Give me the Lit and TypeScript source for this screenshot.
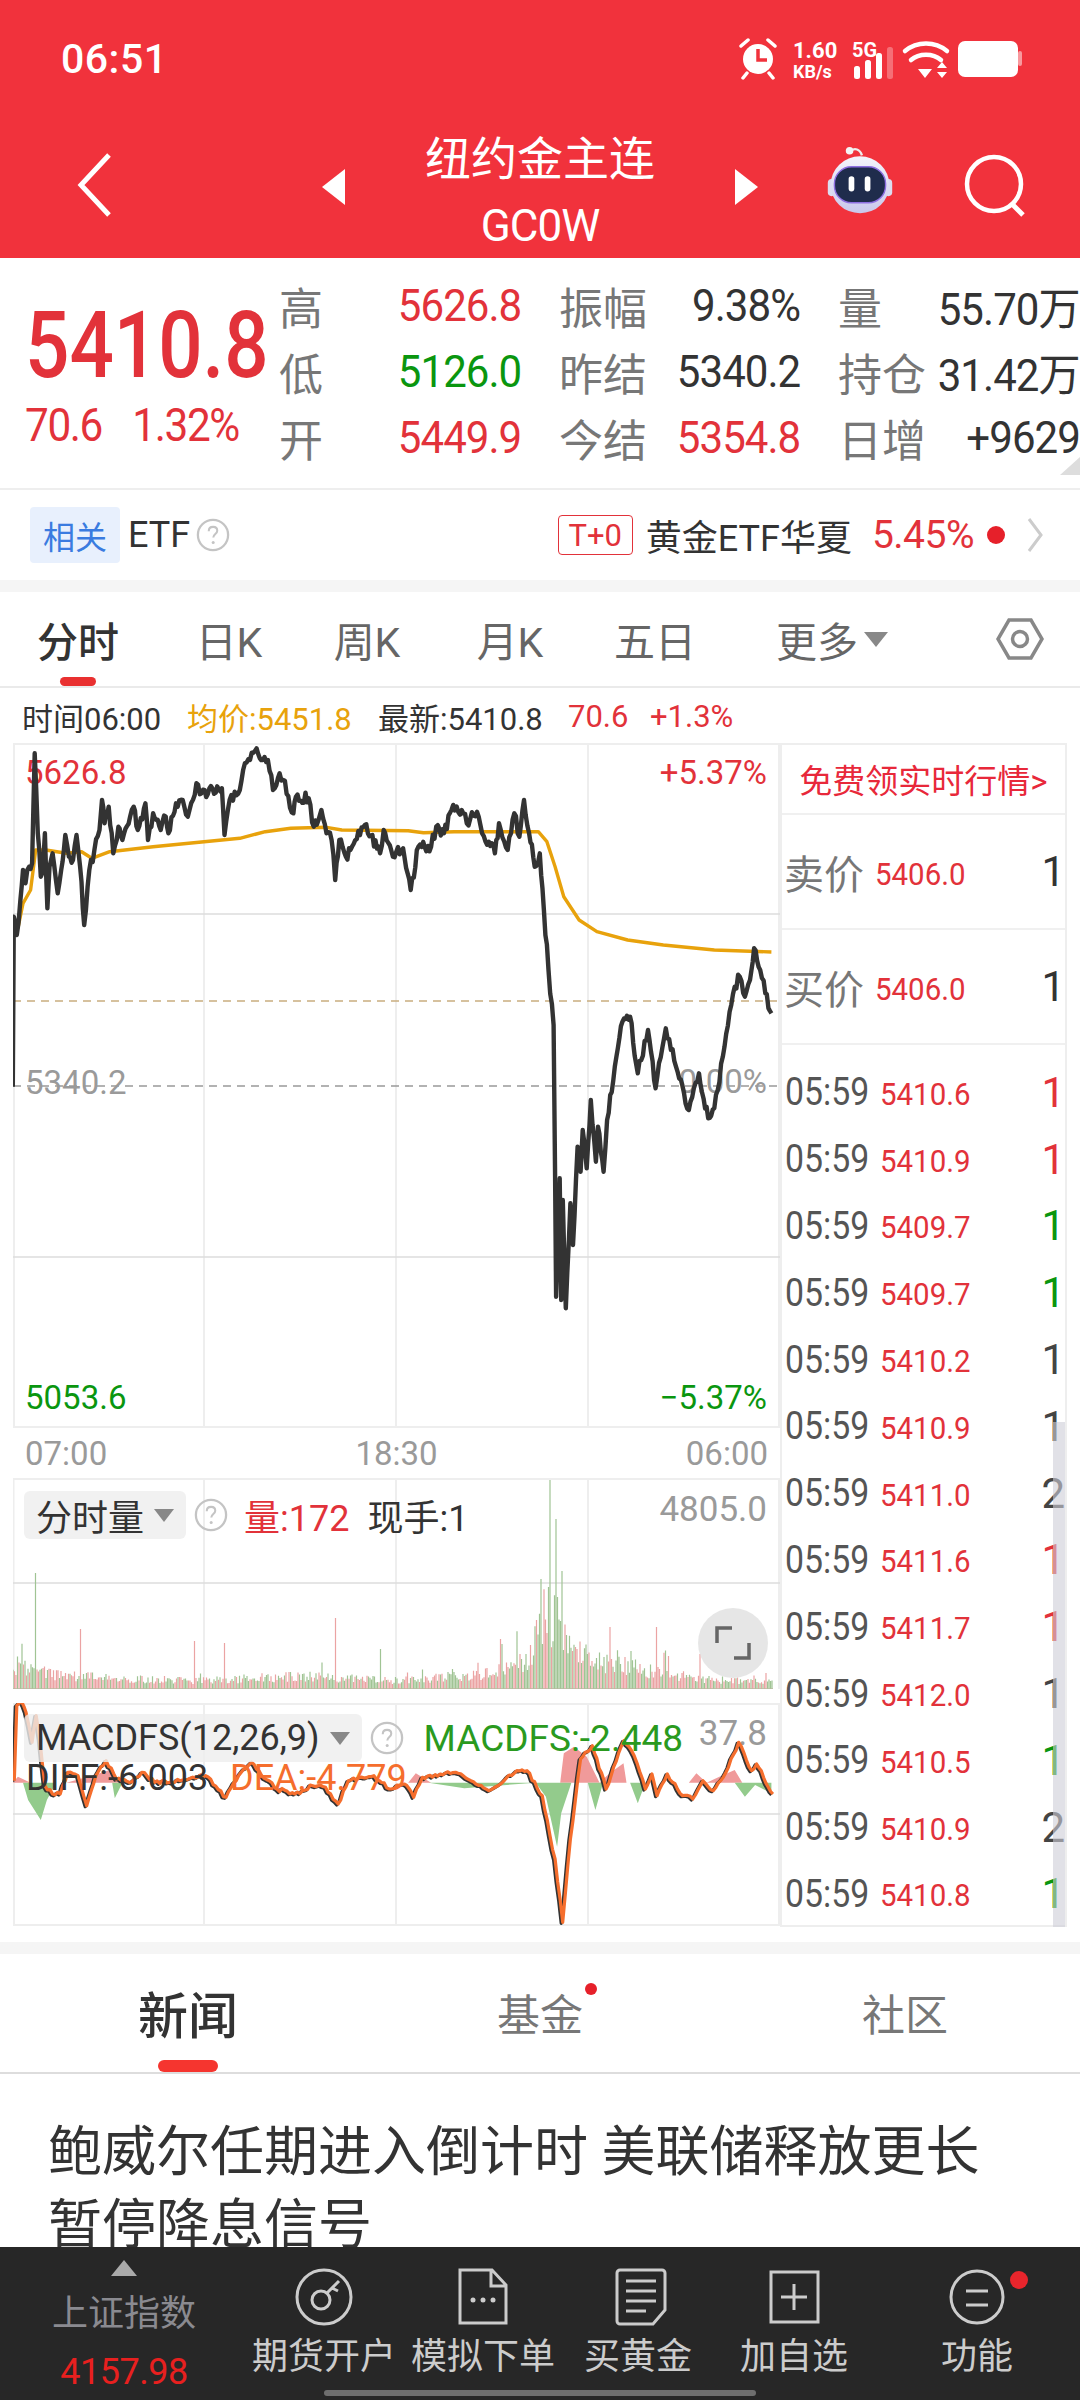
import { LitElement, html, svg, css } from 'lit';
import { customElement } from 'lit/decorators.js';

type Pt = [number, number];

// price and average lines, read off a crop at 1.96x / 3x
const PRICE: Pt[] = [[25,1460],[27,950],[33,1005],[40,900],[45,810],[50,850],[57,800],[63,790],[68,460],[74,700],[80,830],[85,780],[88,700],[93,925],[97,800],[103,760],[113,880],[120,810],[128,705],[135,770],[143,780],[150,705],[157,800],[165,975],[175,810],[185,750],[195,690],[200,600],[205,670],[213,620],[222,760],[232,680],[240,720],[255,650],[262,620],[270,690],[285,610],[290,720],[300,640],[315,690],[325,650],[330,700],[345,610],[358,600],[368,650],[385,550],[395,580],[435,565],[440,705],[450,600],[470,570],[480,490],[490,480],[503,445],[515,480],[525,480],[535,570],[548,520],[555,540],[575,640],[580,590],[605,595],[615,680],[630,630],[640,700],[650,720],[657,840],[665,720],[678,770],[690,740],[715,675],[745,760],[752,690],[770,770],[790,745],[805,870],[820,740],[845,740],[855,680],[870,700],[885,630],[905,630],[915,670],[935,635],[945,700],[958,725],[970,760],[978,670],[995,750],[1008,640],[1018,710],[1027,600],[1037,700],[1048,800],[1058,760],[1066,930],[1075,1110],[1085,1275],[1088,1730],[1090,2090],[1097,1735],[1100,2100],[1103,1800],[1109,2125],[1118,1810],[1123,1935],[1132,1640],[1138,1715],[1142,1590],[1150,1705],[1158,1500],[1168,1685],[1172,1580],[1183,1715],[1190,1560],[1205,1400],[1220,1265],[1235,1250],[1250,1420],[1270,1290],[1285,1465],[1305,1285],[1325,1400],[1350,1530],[1370,1420],[1388,1555],[1400,1525],[1420,1340],[1440,1160],[1450,1130],[1460,1190],[1470,1140],[1478,1045],[1490,1110],[1500,1180],[1512,1240]];
const AVERAGE: Pt[] = [[35,985],[45,910],[60,870],[70,750],[90,750],[130,760],[160,755],[180,775],[215,755],[300,740],[400,725],[470,715],[520,695],[570,685],[640,682],[670,690],[800,692],[830,698],[890,695],[1055,695],[1072,725],[1088,800],[1105,890],[1135,960],[1170,995],[1230,1020],[1300,1035],[1400,1050],[1512,1056]];
const MACD: Pt[] = [[25,545],[30,320],[40,310],[48,340],[60,430],[68,350],[75,420],[85,560],[100,585],[115,585],[130,520],[150,530],[167,620],[185,530],[205,485],[225,540],[250,550],[275,520],[300,550],[350,545],[400,530],[440,595],[470,520],[490,490],[510,530],[540,570],[575,585],[610,560],[635,565],[660,615],[680,545],[730,530],[760,570],[790,555],[808,595],[825,535],[860,525],[890,520],[920,545],[955,575],[985,545],[1010,515],[1030,515],[1060,590],[1075,710],[1085,780],[1100,970],[1115,720],[1125,600],[1135,480],[1158,440],[1185,570],[1220,425],[1240,470],[1262,570],[1275,525],[1285,590],[1305,525],[1335,590],[1355,600],[1375,545],[1395,575],[1420,520],[1445,430],[1470,515],[1480,495],[1512,585]];
const HIST_UP: Pt[] = [[25,548],[35,530],[60,548],[130,548],[185,525],[215,510],[240,548],[800,548],[815,520],[845,548],[1098,548],[1105,460],[1125,440],[1150,470],[1175,548],[1195,520],[1222,490],[1228,548],[1350,548],[1365,520],[1385,548],[1410,530],[1440,510],[1455,548]];
const HIST_DOWN: Pt[] = [[45,548],[55,600],[80,660],[92,600],[110,548],[220,548],[225,595],[240,548],[840,548],[910,565],[1050,548],[1070,590],[1092,740],[1100,640],[1120,548],[1152,548],[1167,630],[1182,548],[1235,548],[1250,610],[1265,548],[1440,548],[1460,590],[1480,555],[1512,580],[1512,548]];
const VOLUME_ENVELOPE: Pt[] = [[13,35],[30,30],[60,20],[120,14],[200,12],[300,18],[390,12],[480,20],[510,28],[530,45],[545,110],[560,95],[575,50],[600,40],[650,26],[700,14],[773,10]];
const VOLUME_SPIKES: Pt[] = [[35,116],[80,60],[195,48],[224,46],[335,71],[380,40],[500,50],[541,110],[550,209],[556,170],[562,118],[656,62],[700,35]];

const TICKS: [string, string][] = [
  ['5410.6', 'up'], ['5410.9', 'up'], ['5409.7', 'down'], ['5409.7', 'down'],
  ['5410.2', 'flat'], ['5410.9', 'flat'], ['5411.0', 'flat2'], ['5411.6', 'up'],
  ['5411.7', 'up'], ['5412.0', 'flat'], ['5410.5', 'down'], ['5410.9', 'flat2'], ['5410.8', 'down'],
];

// small seeded generator so every render gives the same wiggle
function seeded(seed: number) {
  let s = seed;
  return () => {
    s = (s * 1664525 + 1013904223) % 4294967296;
    return s / 4294967296;
  };
}

const priceX = (zx: number) => zx / 1.96;
const priceY = (zy: number) => 600 + zy / 3;
const macdY = (zy: number) => 1600 + zy / 3;

function toPath(pts: Pt[]) {
  return pts.map((p, i) => `${i ? 'L' : 'M'}${p[0].toFixed(1)} ${p[1].toFixed(1)}`).join('');
}

function wiggle(pts: Pt[], step: number, amp: number, seed: number): Pt[] {
  const rnd = seeded(seed);
  const out: Pt[] = [];
  for (let i = 0; i < pts.length - 1; i++) {
    const [x0, y0] = pts[i];
    const [x1, y1] = pts[i + 1];
    const n = Math.max(1, Math.round(Math.abs(x1 - x0) / step));
    for (let k = 0; k < n; k++) {
      const t = k / n;
      const j = k === 0 ? 0 : (rnd() - 0.5) * amp;
      out.push([x0 + (x1 - x0) * t, y0 + (y1 - y0) * t + j]);
    }
  }
  out.push(pts[pts.length - 1]);
  return out;
}

function envelopeAt(x: number) {
  for (let i = 0; i < VOLUME_ENVELOPE.length - 1; i++) {
    const [x0, h0] = VOLUME_ENVELOPE[i];
    const [x1, h1] = VOLUME_ENVELOPE[i + 1];
    if (x >= x0 && x <= x1) return h0 + ((h1 - h0) * (x - x0)) / (x1 - x0);
  }
  return 10;
}

function volumePaths() {
  const rnd = seeded(41);
  let red = '';
  let green = '';
  for (let x = 13; x < 773; x += 1.5) {
    let h = envelopeAt(x) * (0.4 + rnd() * 0.6);
    if (rnd() < 0.035) h *= 1.8;
    for (const [sx, sh] of VOLUME_SPIKES) if (Math.abs(sx - x) < 0.8) h = sh;
    const seg = `M${x.toFixed(1)} 1689V${(1689 - h).toFixed(1)}`;
    if (rnd() < 0.5) red += seg;
    else green += seg;
  }
  return { red, green };
}

const pricePath = toPath(wiggle(PRICE.map(([x, y]) => [priceX(x), priceY(y)] as Pt), 1.6, 11, 7));
const averagePath = toPath(AVERAGE.map(([x, y]) => [priceX(x), priceY(y)] as Pt));
const macdPts = wiggle(MACD.map(([x, y]) => [priceX(x), macdY(y)] as Pt), 2.5, 4, 11);
const diffPath = toPath(macdPts);
const deaPath = toPath(macdPts.map(([x, y]) => [x + 1.5, y - 1] as Pt));
const histUp = toPath(HIST_UP.map(([x, y]) => [priceX(x), macdY(y)] as Pt)) + 'Z';
const histDown = toPath(HIST_DOWN.map(([x, y]) => [priceX(x), macdY(y)] as Pt)) + 'Z';
const volume = volumePaths();

const helpIcon = html`<svg class="help" viewBox="0 0 36 36"><circle cx="18" cy="18" r="16" fill="none" stroke="#c4c4c4" stroke-width="2.4"/><path d="M13.5 14c0-3 2-4.6 4.6-4.6s4.4 1.6 4.4 4c0 3.4-4.2 3.6-4.2 7.2" fill="none" stroke="#c4c4c4" stroke-width="2.2"/><circle cx="18.2" cy="26" r="1.6" fill="#c4c4c4"/></svg>`;

@customElement('app-root')
export class AppRoot extends LitElement {
  static styles = css`
    :host {
      display: flex;
      flex-direction: column;
      width: 1080px;
      height: 2400px;
      overflow: hidden;
      background: #fff;
      color: #333;
      font-family: Roboto, 'Noto Sans CJK SC', sans-serif;
      position: relative;
    }
    svg { display: block; }
    .main { flex: 1; min-height: 0; overflow: hidden; }
    .red { color: #e2323a; }
    .green { color: #0a960f; }
    .gray { color: #9a9a9a; }

    .top { height: 258px; background: #f1323c; color: #fff; position: relative; flex: none; }
    .status { height: 118px; display: flex; align-items: center; padding-left: 61px; }
    .clock { font-size: 41px; font-weight: 500; letter-spacing: 0.5px; flex: 1; }
    .status-icons { width: 330px; height: 50px; margin-right: 19px; }
    .status-icons text { fill: #fff; font-family: Roboto, sans-serif; font-weight: 700; }
    .nav { display: flex; height: 140px; position: relative; }
    .nav-icon { position: absolute; }
    .back { left: 75px; top: 32px; }
    .arrow-l { left: 320px; top: 50px; }
    .arrow-r { left: 734px; top: 50px; }
    .robot { left: 822px; top: 27px; }
    .search { left: 960px; top: 30px; }
    .title { flex: 1; display: flex; flex-direction: column; align-items: center; }
    .title-cn { font-size: 46px; line-height: 60px; margin-top: 11px; }
    .title-code { font-size: 44px; line-height: 60px; letter-spacing: -1px; margin-top: 7px; }

    .stats { height: 232px; display: flex; flex: none; position: relative; border-bottom: 2px solid #eee; box-sizing: border-box; }
    .quote { width: 279px; padding: 40px 0 0 25px; box-sizing: border-box; }
    .last { font-size: 93px; line-height: 96px; font-weight: 500; color: #e2323a; transform: scaleX(0.84); transform-origin: left; white-space: nowrap; }
    .change { display: flex; gap: 33px; font-size: 46px; line-height: 50px; letter-spacing: -1.5px; margin-top: 6px; color: #e2323a; transform: scaleX(0.92); transform-origin: left; }
    .stat-grid { display: grid; grid-template-columns: 242px 241px 242px; column-gap: 38px; grid-auto-rows: 66px; padding-top: 15px; font-size: 44px; }
    .stat { display: flex; justify-content: space-between; align-items: center; white-space: nowrap; letter-spacing: -1px; }
    .stat b { font-weight: 400; color: #777; letter-spacing: 0; }
    .stat span { display: inline-block; transform: scaleX(0.955); transform-origin: right; }
    .corner { position: absolute; right: 0; bottom: 13px; width: 0; height: 0; border-left: 20px solid transparent; border-bottom: 18px solid #ddd; }

    .etf { height: 90px; display: flex; align-items: center; flex: none; padding-left: 30px; font-size: 36px; white-space: nowrap; }
    .etf-tag { width: 90px; height: 56px; background: #e8f0fd; color: #3a7be0; border-radius: 4px; display: flex; align-items: center; justify-content: center; font-size: 32px; margin-right: 8px; }
    .help { width: 34px; height: 34px; margin-left: 6px; flex: none; }
    .etf-right { margin-left: auto; display: flex; align-items: center; padding-right: 36px; }
    .t0 { width: 75px; height: 40px; box-sizing: border-box; border: 1.5px solid #e2323a; border-radius: 4px; color: #e2323a; font-size: 31px; display: flex; align-items: center; justify-content: center; margin-right: 13px; }
    .etf-pct { color: #e2323a; margin-left: 20px; font-size: 39px; letter-spacing: -0.5px; }
    .etf-dot { width: 18px; height: 18px; border-radius: 50%; background: #e6202a; margin: 0 22px 0 13px; }
    .gap { height: 12px; background: #f5f5f5; flex: none; }

    .tabs { height: 96px; display: grid; grid-template-columns: 156px 146px 130px 156px 134px 220px 138px; align-items: center; border-bottom: 2px solid #eaeaea; box-sizing: border-box; position: relative; font-size: 41px; color: #666; }
    .tab { display: flex; justify-content: center; align-items: center; gap: 6px; }
    .tab-on { color: #333; font-weight: 500; }
    .tab-bar { position: absolute; left: 60px; bottom: 0; width: 36px; height: 9px; border-radius: 5px; background: #e93030; }
    .caret { width: 0; height: 0; border-left: 12px solid transparent; border-right: 12px solid transparent; border-top: 15px solid #888; }
    .hex { justify-self: end; margin-right: 36px; }

    .info { height: 55px; display: flex; align-items: center; padding: 2px 0 0 22px; box-sizing: border-box; font-size: 31px; white-space: nowrap; }
    .info span:nth-child(1) { width: 165px; }
    .info span:nth-child(2) { width: 191px; color: #e8a20c; }
    .info span:nth-child(3) { width: 190px; }
    .info span:nth-child(4) { width: 82px; color: #e2323a; }
    .info span:nth-child(5) { color: #e2323a; }

    .market { display: flex; padding-left: 13px; height: 1199px; flex: none; box-sizing: border-box; }
    .charts { width: 767px; flex: none; }
    .panel { position: relative; font-size: 33px; white-space: nowrap; }
    .panel svg.plot { position: absolute; left: 0; top: 0; }
    .price-panel { height: 685px; }
    .axis { height: 50px; display: flex; justify-content: space-between; align-items: center; padding: 0 12px; font-size: 33px; color: #9a9a9a; }
    .volume-panel { height: 211px; margin-bottom: 14px; }
    .macd-panel { height: 223px; }
    .label { position: absolute; line-height: 40px; }
    .l-top { left: 12px; top: 10px; }
    .r-top { right: 13px; top: 10px; }
    .l-mid { left: 12px; top: 320px; }
    .r-mid { right: 13px; top: 319px; }
    .l-bot { left: 12px; top: 635px; }
    .r-bot { right: 13px; top: 635px; }
    .legend { position: absolute; left: 11px; top: 11px; display: flex; align-items: center; font-size: 36px; z-index: 1; }
    .pill { height: 48px; background: rgba(238, 238, 238, 0.8); border-radius: 6px; display: flex; align-items: center; gap: 8px; padding: 0 12px; color: #333; margin-right: 8px; }
    .legend .help { margin: 0 16px 0 0; }
    .legend .caret { border-left-width: 10px; border-right-width: 10px; border-top-width: 13px; margin-left: 2px; }
    .legend-value { margin-right: 18px; }
    .macd-value { color: #2a9a1e; font-size: 37px; margin-left: 4px; }
    .vol-max { right: 13px; top: 12px; font-size: 35px; }
    .macd-max { right: 13px; top: 11px; font-size: 35px; }
    .macd-diff { left: 13px; top: 55px; font-size: 36px; color: #333; z-index: 1; }
    .macd-dea { left: 217px; top: 55px; font-size: 36px; color: #f56e2d; z-index: 1; }
    .expand { position: absolute; left: 685px; top: 130px; width: 70px; height: 70px; border-radius: 50%; background: rgba(222, 222, 222, 0.75); display: flex; align-items: center; justify-content: center; }

    .book { width: 287px; flex: none; box-sizing: border-box; border: 2px solid #eee; position: relative; height: 1184px; }
    .promo { height: 70px; display: flex; align-items: center; justify-content: center; color: #e8283a; font-size: 33px; border-bottom: 2px solid #f0f0f0; white-space: nowrap; box-sizing: border-box; }
    .quote-row { height: 115px; display: flex; align-items: center; padding: 0 0 0 2px; border-bottom: 2px solid #f0f0f0; box-sizing: border-box; }
    .quote-row b { font-weight: 400; font-size: 40px; color: #777; width: 91px; }
    .quote-row i { font-style: normal; color: #e2323a; font-size: 31px; flex: 1; padding-top: 6px; transform: scaleX(0.95); transform-origin: left; }
    .quote-row em { font-style: normal; font-size: 42px; color: #333; }
    .ticks { padding-top: 14px; }
    .tick { height: 66.8px; display: flex; align-items: center; padding: 0 0 0 3px; }
    .tick-time { font-size: 38px; color: #555; width: 95px; transform: scaleX(0.89); transform-origin: left; }
    .tick-price { font-size: 31px; color: #e2323a; flex: 1; padding-top: 4px; transform: scaleX(0.95); transform-origin: left; }
    .tick-qty { font-size: 42px; width: 24px; text-align: right; }
    .tick-qty.up { color: #e2323a; }
    .tick-qty.down { color: #0a960f; }
    .tick-qty.flat, .tick-qty.flat2 { color: #444; }
    .scroll { position: absolute; right: 0; top: 677px; width: 12px; height: 505px; background: rgba(205, 205, 215, 0.6); }

    .gap2 { height: 12px; background: #f5f5f5; }
    .news-tabs { height: 120px; display: grid; grid-template-columns: 376px 328px 376px; align-items: center; border-bottom: 2px solid #ddd; box-sizing: border-box; position: relative; color: #777; font-size: 43px; padding-bottom: 3px; }
    .news-tab { display: flex; justify-content: center; position: relative; }
    .news-on { font-size: 50px; color: #333; font-weight: 500; }
    .news-last { padding-left: 26px; }
    .news-bar { position: absolute; left: 158px; bottom: 0; width: 60px; height: 12px; border-radius: 6px; background: #f5352f; }
    .news-dot { position: absolute; left: 209px; top: 2px; width: 12px; height: 12px; border-radius: 50%; background: #e6202a; }
    .headline { padding: 42px 60px 0 48px; font-size: 54px; line-height: 73px; color: #333; }

    .dock { height: 153px; flex: none; background: #272727; display: grid; grid-template-columns: 248px 152px 166px 144px 168px 198px; position: relative; color: #ccc; font-size: 36px; }
    .dock-item { display: flex; flex-direction: column; align-items: center; padding-top: 20px; white-space: nowrap; }
    .dock-icon { height: 60px; margin-bottom: 8px; position: relative; }
    .dock-label { line-height: 44px; }
    .index { padding-top: 13px; color: #8a8a90; }
    .index-up { width: 0; height: 0; border-left: 13px solid transparent; border-right: 13px solid transparent; border-bottom: 16px solid #aaa; }
    .index-name { line-height: 44px; margin-top: 16px; }
    .index-value { color: #e8201f; font-size: 36px; line-height: 44px; margin-top: 14px; letter-spacing: -0.5px; }
    .dock-dot { position: absolute; left: 1010px; top: 24px; width: 18px; height: 18px; border-radius: 50%; background: #e8252c; }
    .home-bar { position: absolute; left: 324px; bottom: 4px; width: 432px; height: 6px; border-radius: 3px; background: #6e6e6e; }
  `;

  private statusIcons() {
    return svg`
      <g fill="#fff">
        <circle cx="27" cy="25" r="15"/>
        <path d="M10 12l7-6M44 12l-7-6M16 39l-4 5M38 39l4 5" stroke="#fff" stroke-width="3.5" stroke-linecap="round"/>
        <path d="M27 15v11h9" fill="none" stroke="#f1323c" stroke-width="3.5"/>
        <text x="62" y="24" font-size="22">1.60</text>
        <text x="62" y="44" font-size="18">KB/s</text>
        <text x="121" y="23" font-size="20">5G</text>
        <rect x="123" y="32" width="6" height="13" rx="2.5"/>
        <rect x="134" y="26" width="6" height="19" rx="2.5"/>
        <rect x="145" y="19" width="6" height="26" rx="2.5"/>
        <rect x="156" y="13" width="6" height="32" rx="2.5" opacity=".3"/>
      </g>
      <g fill="none" stroke="#fff" stroke-width="4.5" stroke-linecap="round">
        <path d="M174 17c12-10 30-10 42 0"/>
        <path d="M180 26c8-7 22-7 30 0"/>
      </g>
      <path d="M187 35h14l-7 9zM206 34l5-6 5 6zM206 38h10l-5 6z" fill="#fff"/>
      <rect x="227" y="7" width="60" height="36" rx="7" fill="#fff"/>
      <rect x="287" y="17" width="4" height="15" rx="2" fill="#fff" opacity=".5"/>
    `;
  }

  private robot() {
    return html`<svg width="76" height="72" viewBox="0 0 80 76">
      <defs>
        <linearGradient id="shell" x1="0" y1="0" x2="0" y2="1"><stop offset="0" stop-color="#f4f4fb"/><stop offset="1" stop-color="#c9c8ec"/></linearGradient>
      </defs>
      <path d="M31 6c3-3 9-2 11 5" fill="none" stroke="#eee" stroke-width="2.5"/>
      <circle cx="29" cy="6" r="4" fill="#f4f4f4"/>
      <rect x="6" y="36" width="8" height="18" rx="4" fill="#dcdcf0"/>
      <rect x="66" y="36" width="8" height="18" rx="4" fill="#dcdcf0"/>
      <ellipse cx="40" cy="42" rx="31" ry="30" fill="url(#shell)"/>
      <rect x="13" y="23" width="54" height="38" rx="18" fill="#1f2c4c" stroke="#8d6fe0" stroke-width="1.5"/>
      <rect x="28" y="33" width="6" height="16" rx="3" fill="#fff"/>
      <rect x="45" y="33" width="6" height="16" rx="3" fill="#fff"/>
    </svg>`;
  }

  private header() {
    return html`<div class="top">
      <div class="status">
        <div class="clock">06:51</div>
        <svg class="status-icons" viewBox="0 0 330 50">${this.statusIcons()}</svg>
      </div>
      <div class="nav">
        <svg class="nav-icon back" width="40" height="70" viewBox="0 0 40 70"><path d="M34 5L6 35l28 30" fill="none" stroke="#fff" stroke-width="5"/></svg>
        <svg class="nav-icon arrow-l" width="26" height="38" viewBox="0 0 26 38"><path d="M25 1v36L2 19z" fill="#fff"/></svg>
        <div class="title">
          <div class="title-cn">纽约金主连</div>
          <div class="title-code">GC0W</div>
        </div>
        <svg class="nav-icon arrow-r" width="26" height="38" viewBox="0 0 26 38"><path d="M1 1v36l23-18z" fill="#fff"/></svg>
        <div class="nav-icon robot">${this.robot()}</div>
        <svg class="nav-icon search" width="70" height="70" viewBox="0 0 70 70"><circle cx="34" cy="36" r="27" fill="none" stroke="#fff" stroke-width="4.5"/><path d="M52 56l11 11" stroke="#fff" stroke-width="5"/></svg>
      </div>
    </div>`;
  }

  private stats() {
    const stat = (label: string, value: string, cls = '') =>
      html`<div class="stat"><b>${label}</b><span class=${cls}>${value}</span></div>`;
    return html`<div class="stats">
      <div class="quote">
        <div class="last">5410.8</div>
        <div class="change"><span>70.6</span><span>1.32%</span></div>
      </div>
      <div class="stat-grid">
        ${stat('高', '5626.8', 'red')}${stat('振幅', '9.38%')}${stat('量', '55.70万')}
        ${stat('低', '5126.0', 'green')}${stat('昨结', '5340.2')}${stat('持仓', '31.42万')}
        ${stat('开', '5449.9', 'red')}${stat('今结', '5354.8', 'red')}${stat('日增', '+9629')}
      </div>
      <div class="corner"></div>
    </div>`;
  }

  private etf() {
    return html`<div class="etf">
      <div class="etf-tag">相关</div>
      <span>ETF</span>${helpIcon}
      <div class="etf-right">
        <div class="t0">T+0</div>
        <span>黄金ETF华夏</span>
        <span class="etf-pct">5.45%</span>
        <div class="etf-dot"></div>
        <svg width="17" height="36" viewBox="0 0 17 36"><path d="M2 2l12 16L2 34" fill="none" stroke="#ccc" stroke-width="3"/></svg>
      </div>
    </div>`;
  }

  private tabs() {
    return html`<div class="tabs">
      <div class="tab tab-on">分时</div>
      <div class="tab">日K</div>
      <div class="tab">周K</div>
      <div class="tab">月K</div>
      <div class="tab">五日</div>
      <div class="tab">更多<span class="caret"></span></div>
      <svg class="hex" width="48" height="48" viewBox="0 0 48 48"><path d="M13 5h22l11 19-11 19H13L2 24z" fill="none" stroke="#888" stroke-width="3.5"/><circle cx="24" cy="24" r="7.5" fill="none" stroke="#888" stroke-width="3.5"/></svg>
      <div class="tab-bar"></div>
    </div>`;
  }

  private pricePanel() {
    return html`<div class="panel price-panel">
      <span class="label l-top red">5626.8</span>
      <span class="label r-top red">+5.37%</span>
      <span class="label l-mid gray">5340.2</span>
      <span class="label r-mid gray">0.00%</span>
      <span class="label l-bot green">5053.6</span>
      <span class="label r-bot green">−5.37%</span>
      <svg class="plot" width="767" height="685" viewBox="13 743 767 685">
        <rect x="14" y="744" width="765" height="683" fill="none" stroke="#eee" stroke-width="2"/>
        <path d="M204 743V1428M396 743V1428M588 743V1428" stroke="#eee" stroke-width="2"/>
        <path d="M13 914H780M13 1257H780" stroke="#ddd" stroke-width="1.5"/>
        <path d="M13 1001H780" stroke="#c9ad7f" stroke-width="1.5" stroke-dasharray="8 6"/>
        <path d="M13 1086H780" stroke="#999" stroke-width="1.5" stroke-dasharray="8 6"/>
        <path d=${averagePath} fill="none" stroke="#e8a20c" stroke-width="3.4" stroke-linejoin="round"/>
        <path d=${pricePath} fill="none" stroke="#333" stroke-width="4.4" stroke-linejoin="round"/>
      </svg>
    </div>`;
  }

  private volumePanel() {
    return html`<div class="panel volume-panel">
      <svg class="plot" width="767" height="211" viewBox="13 1478 767 211">
        <path d="M14 1479H780" stroke="#eee" stroke-width="2"/>
        <path d="M13.5 1478V1689M204 1478V1689M396 1478V1689M588 1478V1689M779 1478V1689" stroke="#eee" stroke-width="2"/>
        <path d="M13 1583H780" stroke="#ddd" stroke-width="1.5"/>
        <path d=${volume.green} stroke="#a0c494" stroke-width="1.2"/>
        <path d=${volume.red} stroke="#eba3a3" stroke-width="1.2"/>
        <path d="M13 1689H773" stroke="#b9b9a0" stroke-width="1.5"/>
      </svg>
      <div class="legend">
        <div class="pill">分时量<span class="caret"></span></div>
        ${helpIcon}
        <span class="red legend-value">量:172</span>
        <span>现手:1</span>
      </div>
      <span class="label vol-max gray">4805.0</span>
      <div class="expand">
        <svg width="36" height="36" viewBox="0 0 36 36"><path d="M2 18V3h15M34 18v15H19" fill="none" stroke="#666" stroke-width="3.5"/></svg>
      </div>
    </div>`;
  }

  private macdPanel() {
    return html`<div class="panel macd-panel">
      <div class="legend">
        <div class="pill">MACDFS(12,26,9)<span class="caret"></span></div>
        ${helpIcon}
        <span class="macd-value">MACDFS:-2.448</span>
      </div>
      <span class="label macd-max gray">37.8</span>
      <svg class="plot" width="767" height="223" viewBox="13 1703 767 223">
        <rect x="14" y="1704" width="765" height="221" fill="none" stroke="#eee" stroke-width="2"/>
        <path d="M204 1703V1926M396 1703V1926M588 1703V1926" stroke="#eee" stroke-width="2"/>
        <path d="M13 1814H780" stroke="#ddd" stroke-width="1.5"/>
        <path d=${histUp} fill="#f09a9a"/>
        <path d=${histDown} fill="#93cb8c"/>
        <path d=${diffPath} fill="none" stroke="#333" stroke-width="3.2" stroke-linejoin="round"/>
        <path d=${deaPath} fill="none" stroke="#f56e2d" stroke-width="3.2" stroke-linejoin="round"/>
      </svg>
      <span class="label macd-diff">DIFF:-6.003</span>
      <span class="label macd-dea">DEA:-4.779</span>
    </div>`;
  }

  private book() {
    return html`<div class="book">
      <div class="promo">免费领实时行情&gt;</div>
      <div class="quote-row"><b>卖价</b><i>5406.0</i><em>1</em></div>
      <div class="quote-row"><b>买价</b><i>5406.0</i><em>1</em></div>
      <div class="ticks">
        ${TICKS.map(([price, dir]) => html`<div class="tick">
          <span class="tick-time">05:59</span>
          <span class="tick-price">${price}</span>
          <span class="tick-qty ${dir}">${dir === 'flat2' ? 2 : 1}</span>
        </div>`)}
      </div>
      <div class="scroll"></div>
    </div>`;
  }

  private dock() {
    return html`<div class="dock">
      <div class="dock-item index">
        <div class="index-up"></div>
        <div class="index-name">上证指数</div>
        <div class="index-value">4157.98</div>
      </div>
      <div class="dock-item">
        <svg class="dock-icon" width="60" height="60" viewBox="0 0 60 60"><circle cx="30" cy="30" r="27" fill="none" stroke="#ccc" stroke-width="3"/><circle cx="27" cy="33" r="9" fill="none" stroke="#ccc" stroke-width="3"/><path d="M33 26l12-12M38 21l6 3" fill="none" stroke="#ccc" stroke-width="3"/></svg>
        <div class="dock-label">期货开户</div>
      </div>
      <div class="dock-item">
        <svg class="dock-icon" width="60" height="60" viewBox="0 0 60 60"><path d="M7 3h32l14 15v38H7zM38 3v16h15" fill="none" stroke="#ccc" stroke-width="3"/><circle cx="20" cy="33" r="2.5" fill="#ccc"/><circle cx="30" cy="33" r="2.5" fill="#ccc"/><circle cx="40" cy="33" r="2.5" fill="#ccc"/></svg>
        <div class="dock-label">模拟下单</div>
      </div>
      <div class="dock-item">
        <svg class="dock-icon" width="60" height="60" viewBox="0 0 60 60"><path d="M12 3h42a3 3 0 0 1 3 3v37L45 57H12a3 3 0 0 1-3-3V6a3 3 0 0 1 3-3z" fill="none" stroke="#ccc" stroke-width="3"/><path d="M18 14h30M18 24h30M18 34h30M18 44h20" stroke="#ccc" stroke-width="3"/></svg>
        <div class="dock-label">买黄金</div>
      </div>
      <div class="dock-item">
        <svg class="dock-icon" width="60" height="60" viewBox="0 0 60 60"><rect x="7" y="5" width="47" height="50" fill="none" stroke="#ccc" stroke-width="3"/><path d="M30 17v26M17 30h26" stroke="#ccc" stroke-width="3"/></svg>
        <div class="dock-label">加自选</div>
      </div>
      <div class="dock-item">
        <svg class="dock-icon" width="60" height="60" viewBox="0 0 60 60"><circle cx="30" cy="30" r="26" fill="none" stroke="#ccc" stroke-width="3"/><path d="M19 24h22M19 38h22" stroke="#ccc" stroke-width="3"/></svg>
        <div class="dock-label">功能</div>
      </div>
      <div class="dock-dot"></div>
      <div class="home-bar"></div>
    </div>`;
  }

  render() {
    return html`
      ${this.header()}
      <div class="main">
        ${this.stats()}
        ${this.etf()}
        <div class="gap"></div>
        ${this.tabs()}
        <div class="info">
          <span>时间06:00</span><span>均价:5451.8</span><span>最新:5410.8</span><span>70.6</span><span>+1.3%</span>
        </div>
        <div class="market">
          <div class="charts">
            ${this.pricePanel()}
            <div class="axis"><span>07:00</span><span>18:30</span><span>06:00</span></div>
            ${this.volumePanel()}
            ${this.macdPanel()}
          </div>
          ${this.book()}
        </div>
        <div class="gap2"></div>
        <div class="news-tabs">
          <div class="news-tab news-on">新闻</div>
          <div class="news-tab">基金<span class="news-dot"></span></div>
          <div class="news-tab news-last">社区</div>
          <div class="news-bar"></div>
        </div>
        <div class="headline">鲍威尔任期进入倒计时 美联储释放更长暂停降息信号</div>
      </div>
      ${this.dock()}
    `;
  }
}
